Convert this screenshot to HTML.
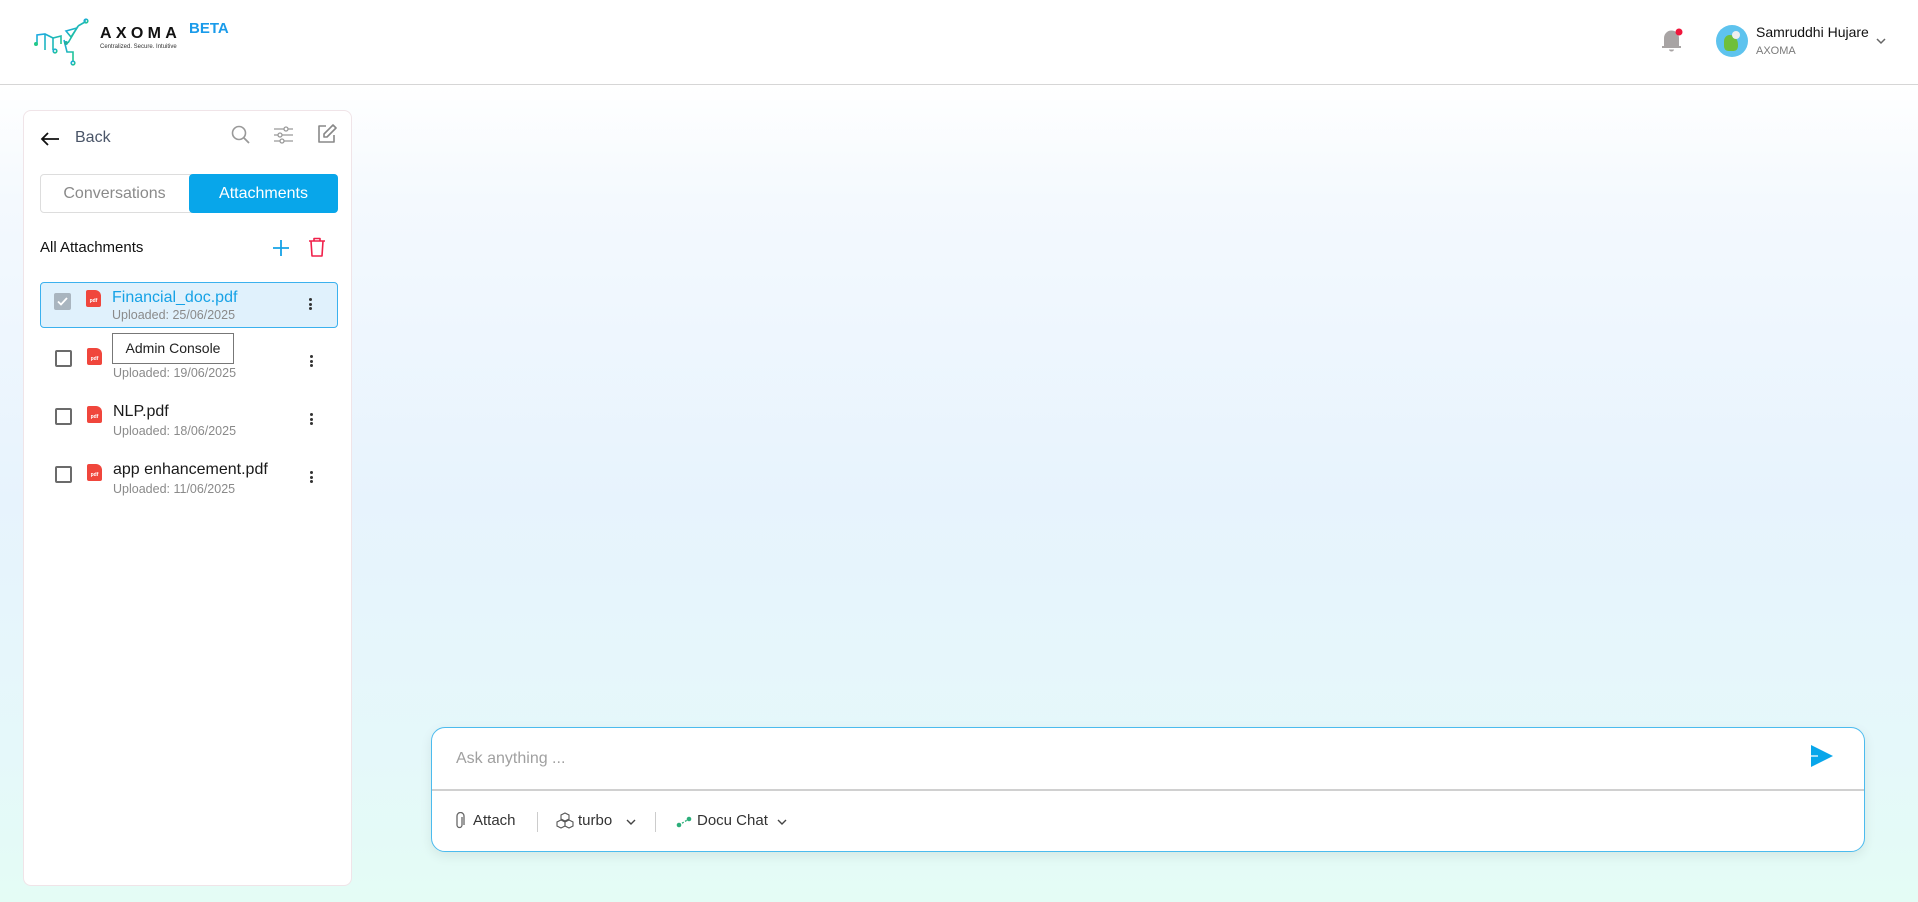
<!DOCTYPE html>
<html><head><meta charset="utf-8"><style>
*{box-sizing:border-box;margin:0;padding:0}
body{width:1918px;height:902px;overflow:hidden;font-family:"Liberation Sans",sans-serif;background:linear-gradient(180deg,#fff 84px,#f4f9fe 200px,#e7f3fd 500px,#e5f8fa 750px,#e4fcf5 902px);position:relative}
.hdr{position:absolute;left:0;top:0;width:1918px;height:85px;background:#fff;border-bottom:1.5px solid #d6d6d6}
.abs{position:absolute}
.side{position:absolute;left:23px;top:110px;width:329px;height:776px;background:#fff;border:1px solid #f0e4e8;border-radius:8px}
.row{position:absolute;left:16px;width:298px;height:46px}
.cb{position:absolute;left:15px;width:17px;height:17px;border:2px solid #6b6b6b;border-radius:2px}
.pdf{position:absolute;left:47px;width:15px;height:17px;background:#f0463c;border-radius:2px 6px 2px 2px;color:#fff;font-size:5px;font-weight:bold;text-align:center;line-height:22px}
.nm{position:absolute;left:73px;font-size:16px;color:#1a1a1a}
.up{position:absolute;left:73px;font-size:12.5px;color:#8a8a8a}
.dots{position:absolute;left:270px;width:3px}
.dots i{display:block;width:3px;height:3px;background:#333;border-radius:50%;margin-bottom:1.5px}
</style></head><body>
<div class="hdr">
 <svg class="abs" style="left:33px;top:18px" width="60" height="48" viewBox="0 0 60 48">
  <defs><linearGradient id="g" x1="0" y1="0" x2="1" y2="1"><stop offset="0" stop-color="#1aa7e8"/><stop offset="1" stop-color="#22c98a"/></linearGradient></defs>
  <g fill="none" stroke="url(#g)" stroke-width="1.6">
   <path d="M4 25 V17 L12 16 L20 20 L28 18 V26"/><path d="M12 16 V32 M20 20 V32 M35 25 L45 8 M45 8 L52 4 M52 4 V2"/><path d="M31 22 L34 34 L40 34 V44"/><path d="M33 13 L44 10 L38 19 Z"/>
   <circle cx="53" cy="3" r="1.8"/><circle cx="22" cy="33" r="1.8"/><circle cx="40" cy="45" r="1.8"/>
  </g>
  <circle cx="3" cy="26" r="2" fill="#22c98a"/><circle cx="33" cy="25" r="2" fill="#22b0a0"/>
 </svg>
 <div class="abs" style="left:100px;top:25px;font-size:16px;font-weight:bold;letter-spacing:4.3px;color:#111">AXOMA</div>
 <div class="abs" style="left:100px;top:44px;font-size:6px;color:#333">Centralized. Secure. Intuitive</div>
 <div class="abs" style="left:189px;top:20px;font-size:15px;font-weight:bold;color:#1a9bea">BETA</div>
 <svg class="abs" style="left:1660px;top:27px" width="24" height="26" viewBox="0 0 24 26"><path d="M4 19 V11 a7.5 7.5 0 0 1 15 0 V19 H21 V21 H2 V19 Z" fill="#a8a4a4"/><path d="M9 22.5 h5 a2.5 2 0 0 1 -5 0" fill="#a8a4a4"/><circle cx="19" cy="5" r="3.5" fill="#f0163c"/></svg>
 <div class="abs" style="left:1716px;top:25px;width:32px;height:32px;border-radius:50%;background:#5ec3ee;overflow:hidden"><div style="position:absolute;left:8px;top:10px;width:14px;height:16px;background:#6fbf3b;border-radius:40% 60% 30% 30%"></div><div style="position:absolute;left:16px;top:6px;width:8px;height:8px;background:#eee;border-radius:50%"></div></div>
 <div class="abs" style="left:1756px;top:24px;font-size:14px;color:#111">Samruddhi Hujare</div>
 <div class="abs" style="left:1756px;top:45px;font-size:11px;color:#7a7a7a">AXOMA</div>
 <svg class="abs" style="left:1875px;top:37px" width="12" height="8" viewBox="0 0 12 8"><path d="M2 2 L6 6 L10 2" stroke="#666" stroke-width="1.5" fill="none"/></svg>
</div>

<div class="side">
 <svg class="abs" style="left:16px;top:21px" width="20" height="14" viewBox="0 0 20 14"><path d="M19 7 H2 M8 1 L2 7 L8 13" stroke="#111" stroke-width="1.8" fill="none"/></svg>
 <div class="abs" style="left:51px;top:18px;font-size:16px;color:#4a5568">Back</div>
 <svg class="abs" style="left:207px;top:14px" width="20" height="20" viewBox="0 0 20 20"><circle cx="8" cy="8" r="6.5" stroke="#999" stroke-width="1.6" fill="none"/><path d="M13 13 L18 18" stroke="#999" stroke-width="1.8"/></svg>
 <svg class="abs" style="left:249px;top:14px" width="21" height="20" viewBox="0 0 21 20"><g stroke="#999" stroke-width="1.3" fill="#fff"><path d="M1 4 H20 M1 10 H20 M1 16 H20"/><circle cx="13" cy="4" r="2"/><circle cx="7" cy="10" r="2"/><circle cx="9" cy="16" r="2"/></g></svg>
 <svg class="abs" style="left:292px;top:12px" width="22" height="22" viewBox="0 0 22 22"><path d="M10 3 H3 V19 H18 V12" stroke="#888" stroke-width="1.6" fill="none" stroke-linejoin="round"/><path d="M17 2 L20 5 L11 14 L8 14 L8 11 Z" stroke="#888" stroke-width="1.6" fill="none" stroke-linejoin="round"/></svg>
 <div class="abs" style="left:16px;top:63px;width:298px;height:39px;border:1px solid #ddd;border-radius:4px"></div>
 <div class="abs" style="left:16px;top:63px;width:149px;height:39px;line-height:39px;text-align:center;font-size:16px;color:#8a8a8a">Conversations</div>
 <div class="abs" style="left:165px;top:63px;width:149px;height:39px;line-height:39px;text-align:center;font-size:16px;color:#fff;background:#08a6ea;border-radius:4px">Attachments</div>
 <div class="abs" style="left:16px;top:128px;font-size:15px;color:#111">All Attachments</div>
 <svg class="abs" style="left:248px;top:128px" width="18" height="18" viewBox="0 0 18 18"><path d="M9 1 V17 M1 9 H17" stroke="#16a2e6" stroke-width="1.8"/></svg>
 <svg class="abs" style="left:284px;top:126px" width="18" height="20" viewBox="0 0 18 20"><path d="M1 4 H17 M6 4 V1.5 H12 V4 M3 4 L4 19 H14 L15 4" stroke="#f0204a" stroke-width="1.6" fill="none" stroke-linejoin="round"/></svg>

 <div class="row" style="top:171px;background:#e0f1fc;border:1.5px solid #3bb1ee;border-radius:4px">
  <div class="cb" style="top:10px;left:13px;background:#a9b5bf;border-color:#a9b5bf"><svg width="13" height="13" viewBox="0 0 13 13" style="position:absolute;left:0;top:0"><path d="M2 6.5 L5 9.5 L11 3" stroke="#fff" stroke-width="1.8" fill="none"/></svg></div>
  <div class="pdf" style="top:7px;left:45px">pdf</div>
  <div class="nm" style="top:6px;left:71px;color:#16a2e6">Financial_doc.pdf</div>
  <div class="up" style="top:25px;left:71px">Uploaded: 25/06/2025</div>
  <div class="dots" style="top:15px;left:268px"><i></i><i></i><i></i></div>
 </div>
 <div class="row" style="top:229px">
  <div class="cb" style="top:10px"></div><div class="pdf" style="top:8px">pdf</div>
  <div class="nm" style="top:5px">Legal.pdf</div><div class="up" style="top:26px">Uploaded: 19/06/2025</div>
  <div class="dots" style="top:15px"><i></i><i></i><i></i></div>
 </div>
 <div class="row" style="top:287px">
  <div class="cb" style="top:10px"></div><div class="pdf" style="top:8px">pdf</div>
  <div class="nm" style="top:5px">NLP.pdf</div><div class="up" style="top:26px">Uploaded: 18/06/2025</div>
  <div class="dots" style="top:15px"><i></i><i></i><i></i></div>
 </div>
 <div class="row" style="top:345px">
  <div class="cb" style="top:10px"></div><div class="pdf" style="top:8px">pdf</div>
  <div class="nm" style="top:5px">app enhancement.pdf</div><div class="up" style="top:26px">Uploaded: 11/06/2025</div>
  <div class="dots" style="top:15px"><i></i><i></i><i></i></div>
 </div>
 <div class="abs" style="left:88px;top:222px;width:122px;height:31px;background:#fff;border:1px solid #777;font-size:14px;color:#222;line-height:29px;text-align:center">Admin Console</div>
</div>

<div class="abs" style="left:431px;top:727px;width:1434px;height:125px;background:#fff;border:1.5px solid #4cbbee;border-radius:14px;box-shadow:0 4px 12px rgba(0,0,0,0.08)">
 <div class="abs" style="left:24px;top:22px;font-size:16px;color:#a0a0a0">Ask anything ...</div>
 <svg class="abs" style="left:1378px;top:16px" width="24" height="24" viewBox="0 0 24 24"><path d="M1 1 L23 12 L1 23 Z" fill="#08a6ea"/><path d="M1 12 H8" stroke="#d8eef8" stroke-width="1.5"/></svg>
 <div class="abs" style="left:0;top:61px;width:100%;height:1.5px;background:#d0d0d0"></div>
 <svg class="abs" style="left:22px;top:84px" width="12" height="18" viewBox="0 0 12 18"><path d="M8 5 V13 a2.5 2.5 0 0 1 -5 0 V4 a3.5 3.5 0 0 1 7 0 V13" stroke="#666" stroke-width="1.3" fill="none"/></svg>
 <div class="abs" style="left:41px;top:84px;font-size:15px;color:#333">Attach</div>
 <div class="abs" style="left:105px;top:84px;width:1px;height:20px;background:#ccc"></div>
 <svg class="abs" style="left:124px;top:84px" width="18" height="18" viewBox="0 0 18 18"><g stroke="#555" stroke-width="1.1" fill="none"><path d="M9 1 L13 3 V7 L9 9 L5 7 V3 Z"/><path d="M5 8 L9 10 V14 L5 16 L1 14 V10 Z"/><path d="M13 8 L17 10 V14 L13 16 L9 14 V10 Z"/></g></svg>
 <div class="abs" style="left:146px;top:84px;font-size:15px;color:#333">turbo</div>
 <svg class="abs" style="left:194px;top:91px" width="10" height="7" viewBox="0 0 10 7"><path d="M1 1 L5 5 L9 1" stroke="#444" stroke-width="1.4" fill="none"/></svg>
 <div class="abs" style="left:223px;top:84px;width:1px;height:20px;background:#ccc"></div>
 <svg class="abs" style="left:244px;top:88px" width="16" height="12" viewBox="0 0 16 12"><path d="M3 9 L13 3" stroke="#2cae7a" stroke-width="1.3" stroke-dasharray="2 1.5"/><circle cx="3" cy="9" r="2.3" fill="#2cae7a"/><circle cx="13" cy="3" r="2.3" fill="#2cae7a"/></svg>
 <div class="abs" style="left:265px;top:84px;font-size:15px;color:#333">Docu Chat</div>
 <svg class="abs" style="left:345px;top:91px" width="10" height="7" viewBox="0 0 10 7"><path d="M1 1 L5 5 L9 1" stroke="#444" stroke-width="1.4" fill="none"/></svg>
</div>
</body></html>
